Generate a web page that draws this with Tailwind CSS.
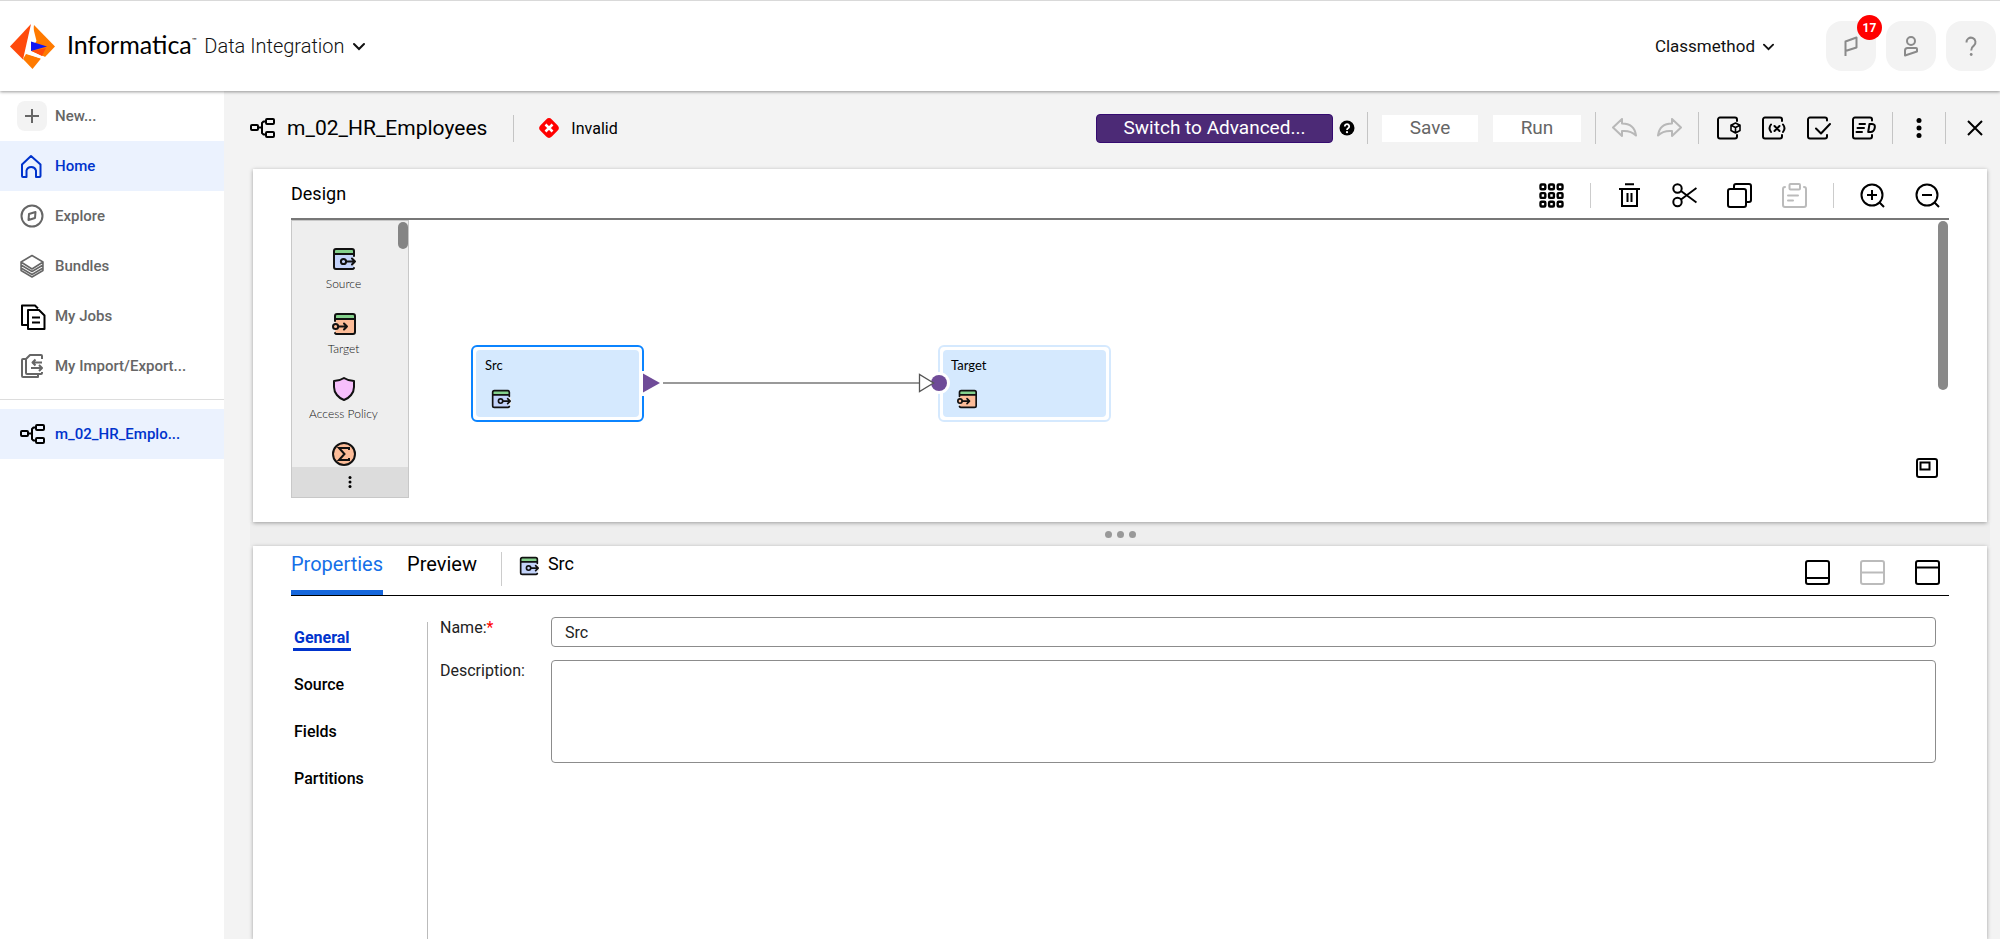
<!DOCTYPE html>
<html lang="en">
<head>
<meta charset="utf-8">
<title>Informatica Data Integration</title>
<script src="https://cdn.jsdelivr.net/npm/@tailwindcss/browser@4"></script>
</head>
<body class="min-h-screen flex flex-col bg-[#f3f3f3] text-black font-[Roboto,sans-serif]">

<svg class="hidden" aria-hidden="true">
  <symbol id="mapping" viewBox="0 0 25 20" fill="none" stroke="currentColor" stroke-width="2" stroke-linejoin="round">
    <rect x="1" y="7" width="7" height="5" rx="1"/><rect x="16" y="1" width="8" height="5" rx="1"/><rect x="16" y="14" width="8" height="5" rx="1"/>
    <path d="M8 9.500h4M16 3.500h-2.500l-1.500 1.500v10l1.500 1.500H16"/>
  </symbol>
  <symbol id="source" viewBox="0 0 24 24" fill="none" stroke="#111" stroke-width="2" stroke-linecap="round" stroke-linejoin="round">
    <path d="M2 7h20v14a1 1 0 0 1-1 1H3a1 1 0 0 1-1-1z" fill="#c3d3fa" stroke="none"/>
    <path d="M4 2h16a2 2 0 0 1 2 2v3H2V4a2 2 0 0 1 2-2z" fill="#84d18c" stroke="none"/>
    <path d="M22 9V4a2 2 0 0 0-2-2H4a2 2 0 0 0-2 2v16a2 2 0 0 0 2 2h16a2 2 0 0 0 2-1M2 7h20"/>
    <path d="M20.500 10.500H24v8h-3.500z" fill="#eee" stroke="none"/>
    <circle cx="11.500" cy="14.500" r="2.600"/><path d="M14.500 14.500H23M20 11.500l3 3-3 3"/>
  </symbol>
  <symbol id="target" viewBox="0 0 24 24" fill="none" stroke="#111" stroke-width="2" stroke-linecap="round" stroke-linejoin="round">
    <path d="M3 7h20v14a1 1 0 0 1-1 1H4a1 1 0 0 1-1-1z" fill="#fcbc98" stroke="none"/>
    <path d="M5 2h16a2 2 0 0 1 2 2v3H3V4a2 2 0 0 1 2-2z" fill="#84d18c" stroke="none"/>
    <path d="M3 9V4a2 2 0 0 1 2-2h16a2 2 0 0 1 2 2v16a2 2 0 0 1-2 2H5a2 2 0 0 1-2-1M3 7h20"/>
    <path d="M1 10.500h3.500v8H1z" fill="#eee" stroke="none"/>
    <circle cx="3.600" cy="14.500" r="2.600" fill="#fcbc98"/><path d="M6.500 14.500H15M12 11.500l3 3-3 3"/>
  </symbol>
</svg>

<header class="relative z-10 h-[91px] shrink-0 flex items-center bg-white border-t border-[#d9d9d9] pl-[10px] pr-1 shadow-[0_1px_3px_rgba(0,0,0,0.4)]">
  <svg class="size-[45px]" viewBox="0 0 45 45" aria-hidden="true">
    <path d="M21 0L0 22.500l13 13z" fill="#ff4a0c"/>
    <path d="M24 1L45 22.500 35 33 21 27.500z" fill="#ff7a00"/>
    <path d="M16 30l15 4.500L22.500 45 13 35z" fill="#ff7a00"/>
    <path d="M22.500 0L15 29l17 6 3-2-14-6z" fill="#fff"/>
    <path d="M22.500 1l4 16-6 9-4 2z" fill="#fff"/>
    <path d="M22 27l14-3-4 8z" fill="#ff4a0c"/>
    <path d="M21 17.500l16 5-16 4.500z" fill="#1016f5"/>
  </svg>
  <div class="ml-3 flex items-start font-[Lato,sans-serif] text-[25px] leading-8 pb-1">Informatica<span class="text-[6px] leading-[24px]">™</span></div>
  <button class="ml-2 flex items-center gap-2 text-[20px] leading-6 font-light text-[#111]">Data Integration
    <svg class="size-3" viewBox="0 0 12 12" fill="none" stroke="#111" stroke-width="2" stroke-linecap="round"><path d="M1 4l5 5 5-5"/></svg>
  </button>
  <button class="ml-auto mr-[52px] flex items-center gap-2 text-[17px] leading-6 text-[#111]">Classmethod
    <svg class="size-[11px]" viewBox="0 0 12 12" fill="none" stroke="#111" stroke-width="2" stroke-linecap="round"><path d="M1 4l5 5 5-5"/></svg>
  </button>
  <div class="flex gap-[10px] text-[#8a8a8a]">
    <button aria-label="Notifications" class="relative size-[50px] rounded-2xl bg-[#f3f3f3] flex items-center justify-center">
      <svg class="size-6" viewBox="0 0 24 24" fill="none" stroke="currentColor" stroke-width="2" stroke-linejoin="round"><path d="M6.500 22V7.500L17.500 3.500v10L6.500 17"/></svg>
      <span class="absolute -top-[6px] -right-[6px] size-[25px] rounded-full bg-[#ff0000] text-white text-xs font-bold flex items-center justify-center">17</span>
    </button>
    <button aria-label="Account" class="size-[50px] rounded-2xl bg-[#f3f3f3] flex items-center justify-center">
      <svg class="size-6" viewBox="0 0 24 24" fill="none" stroke="currentColor" stroke-width="2" stroke-linejoin="round"><circle cx="12" cy="7" r="4"/><path d="M6 21.500v-5a2.500 2.500 0 0 1 2.500-2.500H17a1 1 0 0 1 1 1v2.500z"/></svg>
    </button>
    <button aria-label="Help" class="size-[50px] rounded-2xl bg-[#f3f3f3] flex items-center justify-center">
      <svg class="size-6" viewBox="0 0 24 24" fill="none" stroke="currentColor" stroke-width="2"><path d="M7.500 8.500a4.500 4.500 0 1 1 7.500 3c-2 1.500-2.800 2-2.800 5"/><circle cx="12.200" cy="20.500" r="1.400" fill="currentColor" stroke="none"/></svg>
    </button>
  </div>
</header>

<div class="flex-1 flex">
  <nav class="w-[224px] shrink-0 bg-white text-[15px] font-medium text-[#666]">
    <button class="w-full h-[50px] flex items-center pl-[17px] gap-2">
      <span class="size-[30px] rounded-lg bg-[#f3f3f3] flex items-center justify-center"><svg class="size-4" viewBox="0 0 16 16" stroke="#666" stroke-width="2"><path d="M8 1v14M1 8h14"/></svg></span>New...
    </button>
    <a href="#home" class="h-[50px] flex items-center pl-5 gap-[11px] bg-[#ebf2fe] text-[#0033cc]">
      <svg class="size-6" viewBox="0 0 24 24" fill="none" stroke="currentColor" stroke-width="2" stroke-linejoin="round"><path d="M2 10.500L11 2l9.500 8.500V22a1 1 0 0 1-1 1H16v-6.500a5 5 0 0 0-9.500 0V23H3a1 1 0 0 1-1-1z"/></svg>Home
    </a>
    <a href="#explore" class="h-[50px] flex items-center pl-5 gap-[11px]">
      <svg class="size-6" viewBox="0 0 24 24" fill="none" stroke="currentColor" stroke-width="2" stroke-linejoin="round"><circle cx="12" cy="12" r="10.500"/><path d="M9 10l6.500-2L15 14l-6.500 2z"/></svg>Explore
    </a>
    <a href="#bundles" class="h-[50px] flex items-center pl-5 gap-[11px]">
      <svg class="size-6" viewBox="0 0 24 24" fill="none" stroke="currentColor" stroke-width="1.500" stroke-linejoin="round"><path d="M12 1.500l11 6.500-11 7L1 8zM1 8v3l11 6.500L23 11V8M1 11v3l11 6.500L23 14v-3M1 14v2.500l11 6.500 11-6.500V14"/></svg>Bundles
    </a>
    <a href="#jobs" class="h-[50px] flex items-center pl-5 gap-[11px]">
      <svg class="size-6 overflow-visible" viewBox="0 0 24 24" fill="none" stroke="#000" stroke-width="2" stroke-linejoin="round"><path d="M8 21H2V1.500h13l3 3M8 6h11l5.500 5.500V25H8zM12 13.500h8M12 18.500h8"/></svg>My Jobs
    </a>
    <a href="#import" class="h-[50px] flex items-center pl-5 gap-[11px]">
      <svg class="size-6" viewBox="0 0 24 24" fill="none" stroke="currentColor" stroke-width="2" stroke-linejoin="round"><path d="M6 5H3a1 1 0 0 0-1 1v16a1 1 0 0 0 1 1h15v-3M22 5V2a1 1 0 0 0-1-1H10L6 5v14a1 1 0 0 0 1 1h14a1 1 0 0 0 1-1v-1M22 8.500H12M15.500 5.500l-3 3 3 3M11 14h11M19 11l3 3-3 3"/></svg>My Import/Export...
    </a>
    <div class="mt-2 mb-[9px] border-t border-[#ddd]"></div>
    <a href="#mapping" class="h-[50px] flex items-center pl-5 gap-[10px] bg-[#ebf2fe] text-[#0033cc]">
      <svg class="w-[25px] h-5 text-black"><use href="#mapping"/></svg>m_02_HR_Emplo...
    </a>
  </nav>

  <main class="flex-1 min-w-0 flex flex-col">
    <div class="h-[78px] shrink-0 flex items-center pb-1 pl-[26px] pr-4">
      <svg class="w-[25px] h-5"><use href="#mapping"/></svg>
      <h1 class="ml-3 pt-0.5 text-[21px]">m_02_HR_Employees</h1>
      <div class="ml-[26px] w-px h-[27px] bg-[#c4c4c4]"></div>
      <svg class="ml-[25px] size-5" viewBox="0 0 20 20"><rect x="2" y="2" width="16" height="16" rx="4" transform="rotate(45 10 10)" fill="#f00"/><path d="M6.500 6.500l7 7M13.500 6.500l-7 7" stroke="#fff" stroke-width="2.500"/></svg>
      <span class="ml-3 pt-0.5 text-[16px]">Invalid</span>

      <button class="ml-auto w-[237px] h-[29px] rounded-sm border border-[#350b70] bg-[#4c2a76] text-white text-[19px] leading-6">Switch to Advanced...</button>
      <svg class="ml-1.5 size-4" viewBox="0 0 16 16"><circle cx="8" cy="8" r="7.500"/><path d="M5.800 6.400a2.200 2.200 0 1 1 3.600 1.700C8.300 8.800 8 9 8 10" fill="none" stroke="#fff" stroke-width="1.800"/><circle cx="8" cy="12.200" r="1.100" fill="#fff"/></svg>
      <div class="ml-3 w-px h-8 bg-[#c4c4c4]"></div>
      <button class="ml-[14px] w-24 h-[27px] bg-white text-[#666] text-[19px] leading-6">Save</button>
      <button class="ml-[15px] w-[88px] h-[27px] bg-white text-[#666] text-[19px] leading-6">Run</button>
      <div class="ml-[14px] w-px h-8 bg-[#c4c4c4]"></div>
      <button aria-label="Undo" class="ml-4"><svg class="w-[25px] h-5 text-[#b8b8b8]" viewBox="0 0 25 20" fill="none" stroke="currentColor" stroke-width="2" stroke-linejoin="round"><path d="M1 9.500L10 1v4.500c8 0 13 4.500 14 12-3.500-3.500-8-5-14-4.500V18z"/></svg></button>
      <button aria-label="Redo" class="ml-5"><svg class="w-[25px] h-5 text-[#b8b8b8]" viewBox="0 0 25 20" fill="none" stroke="currentColor" stroke-width="2" stroke-linejoin="round"><path d="M24 9.500L15 1v4.500c-8 0-13 4.500-14 12 3.500-3.500 8-5 14-4.500V18z"/></svg></button>
      <div class="ml-4 w-px h-8 bg-[#c4c4c4]"></div>
      <button aria-label="Dependencies" class="ml-[18px]"><svg class="size-6" viewBox="0 0 24 24" fill="none" stroke="#000" stroke-width="2" stroke-linecap="round" stroke-linejoin="round"><path d="M20 5V3.500a2 2 0 0 0-2-2H3a2 2 0 0 0-2 2v17a2 2 0 0 0 2 2h15a2 2 0 0 0 2-2V19"/><path d="M18.500 7l4.500 2.200v5.300L18.500 17 14 14.500V9.200zM14 9.200l4.500 2.300L23 9.200M18.500 11.500V17" stroke-width="1.600"/></svg></button>
      <button aria-label="Parameters" class="ml-[21px]"><svg class="size-6" viewBox="0 0 24 24" fill="none" stroke="#000" stroke-width="2" stroke-linecap="round"><path d="M20 5V3.500a2 2 0 0 0-2-2H3a2 2 0 0 0-2 2v17a2 2 0 0 0 2 2h15a2 2 0 0 0 2-2V19"/><path d="M9 8.500c-2 2.500-2 5 0 7.500M21 8.500c2 2.500 2 5 0 7.500M12.500 10l5 5M17.500 10l-5 5"/></svg></button>
      <button aria-label="Validate" class="ml-[21px]"><svg class="size-6" viewBox="0 0 24 24" fill="none" stroke="#000" stroke-width="2" stroke-linecap="round" stroke-linejoin="round"><path d="M20 4.500V3.500a2 2 0 0 0-2-2H3a2 2 0 0 0-2 2v17a2 2 0 0 0 2 2h15a2 2 0 0 0 2-2V19M9 12.500l5 5 9-9.500"/></svg></button>
      <button aria-label="Details" class="ml-[21px]"><svg class="size-6" viewBox="0 0 24 24" fill="none" stroke="#000" stroke-width="2" stroke-linecap="round" stroke-linejoin="round"><path d="M20 4.500V3.500a2 2 0 0 0-2-2H3a2 2 0 0 0-2 2v17a2 2 0 0 0 2 2h15a2 2 0 0 0 2-2V19M7.500 8H13M5.500 12H12M4.500 16H10M17.500 8H20c2.500 0 3.200 1.500 2.700 4s-2 4-4.200 4h-2.300z"/></svg></button>
      <div class="ml-4 w-px h-8 bg-[#c4c4c4]"></div>
      <button aria-label="More" class="ml-4"><svg class="size-5" viewBox="0 0 20 20"><circle cx="10" cy="2.500" r="2.500"/><circle cx="10" cy="10" r="2.500"/><circle cx="10" cy="17.500" r="2.500"/></svg></button>
      <div class="ml-4 w-px h-8 bg-[#c4c4c4]"></div>
      <button aria-label="Close" class="ml-5"><svg class="size-[18px]" viewBox="0 0 18 18" stroke="#000" stroke-width="2"><path d="M2 2l14 14M16 2L2 16"/></svg></button>
    </div>

    <section class="relative ml-[29px] mr-[13px] px-[38px] h-[353px] shrink-0 bg-white shadow-[0_1px_4px_rgba(0,0,0,0.35)] flex flex-col">
      <div class="h-[51px] shrink-0 flex items-center border-b-2 border-[#777] pr-[9px] pt-1">
        <h2 class="text-[18px] pb-1">Design</h2>
        <button aria-label="Grid" class="ml-auto"><svg class="size-[25px]" viewBox="0 0 25 25" fill="none" stroke="#000" stroke-width="2.400"><rect x="1.500" y="1.500" width="4.800" height="4.800" rx="1"/><rect x="10.100" y="1.500" width="4.800" height="4.800" rx="1"/><rect x="18.700" y="1.500" width="4.800" height="4.800" rx="1"/><rect x="1.500" y="10.100" width="4.800" height="4.800" rx="1"/><rect x="10.100" y="10.100" width="4.800" height="4.800" rx="1"/><rect x="18.700" y="10.100" width="4.800" height="4.800" rx="1"/><rect x="1.500" y="18.700" width="4.800" height="4.800" rx="1"/><rect x="10.100" y="18.700" width="4.800" height="4.800" rx="1"/><rect x="18.700" y="18.700" width="4.800" height="4.800" rx="1"/></svg></button>
        <div class="mx-[26px] w-px h-[25px] bg-[#ccc]"></div>
        <div class="flex gap-[30px]">
          <button aria-label="Delete"><svg class="size-[25px]" viewBox="0 0 25 25" fill="none" stroke="#000" stroke-width="2"><path d="M8 1.200h9M2 6h21M5 6v17h15V6M10.500 10v9M14.500 10v9"/></svg></button>
          <button aria-label="Cut"><svg class="size-[25px]" viewBox="0 0 25 25" fill="none" stroke="#000" stroke-width="2"><circle cx="5.500" cy="5.500" r="4.200"/><circle cx="5.500" cy="19" r="4.200"/><path d="M9 8l15.500 11.500M9 16.500L24.500 5"/></svg></button>
          <button aria-label="Copy"><svg class="size-[25px]" viewBox="0 0 25 25" fill="none" stroke="#000" stroke-width="2"><rect x="1" y="6" width="18" height="18" rx="2"/><path d="M7 6V3a2 2 0 0 1 2-2h13a2 2 0 0 1 2 2v14a2 2 0 0 1-2 2h-3"/></svg></button>
          <button aria-label="Paste"><svg class="size-[25px]" viewBox="0 0 25 25" fill="none" stroke="#bbb" stroke-width="2" stroke-linecap="round"><path d="M3 4a2 2 0 0 0-2 2v16a2 2 0 0 0 2 2h19a2 2 0 0 0 2-2V6a2 2 0 0 0-2-2M6 12.500h10M6 17.500h5"/><rect x="7.500" y="1" width="10.500" height="5.500" rx="1"/></svg></button>
        </div>
        <div class="mx-[26px] w-px h-[25px] bg-[#ccc]"></div>
        <div class="flex gap-[30px]">
          <button aria-label="Zoom in"><svg class="size-[25px]" viewBox="0 0 25 25" fill="none" stroke="#000" stroke-width="2"><circle cx="12" cy="12" r="10.500"/><path d="M19 19l5 5M12 7v10M7 12h10"/></svg></button>
          <button aria-label="Zoom out"><svg class="size-[25px]" viewBox="0 0 25 25" fill="none" stroke="#000" stroke-width="2"><circle cx="12" cy="12" r="10.500"/><path d="M19 19l5 5M7 12h10"/></svg></button>
        </div>
      </div>

      <div class="flex-1 flex items-start">
        <div class="relative w-[118px] h-[278px] border border-[#c8c8c8] bg-[#eee] flex flex-col font-[Lato,sans-serif] font-light text-[#111]">
          <div class="flex-1 min-h-0 overflow-hidden w-[103px] pt-[26px] flex flex-col gap-[7px] text-[12px] leading-4">
            <div class="h-[58px] shrink-0 flex flex-col items-center gap-[5px]"><svg class="size-6"><use href="#source"/></svg>Source</div>
            <div class="h-[58px] shrink-0 flex flex-col items-center gap-[5px]"><svg class="size-6"><use href="#target"/></svg>Target</div>
            <div class="h-[58px] shrink-0 flex flex-col items-center gap-[5px]"><svg class="size-6" viewBox="0 0 24 24" fill="#f6bffb" stroke="#111" stroke-width="2" stroke-linejoin="round"><path d="M12 1c3 2 6.500 3 10 3v6c0 6-4.500 11-10 13C6.500 21 2 16 2 10V4c3.500 0 7-1 10-3z"/></svg>Access Policy</div>
            <div class="h-[58px] shrink-0 flex flex-col items-center"><svg class="size-6" viewBox="0 0 24 24" fill="#fcbc98" stroke="#111" stroke-width="2"><circle cx="12" cy="12" r="11"/><path d="M17 8V6H7l5.500 6L7 18h10v-2" fill="none"/></svg></div>
          </div>
          <button aria-label="More transformations" class="h-[30px] shrink-0 bg-[#dcdcdc] flex items-center justify-center"><svg class="size-3" viewBox="0 0 12 12"><circle cx="6" cy="1.500" r="1.500"/><circle cx="6" cy="6" r="1.500"/><circle cx="6" cy="10.500" r="1.500"/></svg></button>
          <div class="absolute top-px right-0 w-[10px] h-[27px] rounded-full bg-[#858585]"></div>
        </div>

        <div class="relative flex-1 self-stretch font-[Lato,sans-serif] text-[13px] leading-4">
          <div class="absolute left-[62px] top-[125px] w-[173px] h-[77px] rounded-md border-2 border-[#0b84ff] p-[3px]">
            <div class="size-full rounded bg-[#d5e9fe] pl-[9px] pt-[7px] flex flex-col gap-4">Src<svg class="ml-[6px] size-5"><use href="#source"/></svg></div>
          </div>
          <div class="absolute left-[529px] top-[125px] w-[173px] h-[77px] rounded-md border-2 border-[#d5e9fe] p-[3px]">
            <div class="size-full rounded bg-[#d5e9fe] pl-2 pt-[7px] flex flex-col gap-4">Target<svg class="ml-[6px] size-5"><use href="#target"/></svg></div>
          </div>
          <svg class="absolute left-0 top-0 w-[710px] h-[220px]" fill="none">
            <path d="M232 151h4v25h-4z" fill="#fff"/>
            <path d="M234 153.500l17 9.500-17 9.500z" fill="#6f4b98"/>
            <path d="M254 163h256" stroke="#777" stroke-width="1.500"/>
            <circle cx="530" cy="163" r="11" fill="#fff"/>
            <circle cx="530" cy="163" r="8" fill="#6f4b98"/>
            <path d="M510.500 154.500v17l14-8.500z" stroke="#555" fill="#fff" stroke-width="1.300"/>
          </svg>
          <div class="absolute right-px top-px w-[10px] h-[169px] rounded-full bg-[#898989]"></div>
          <button aria-label="Overview" class="absolute right-[11px] top-[238px]"><svg class="w-[22px] h-5" viewBox="0 0 22 20" fill="none" stroke="#000" stroke-width="2"><rect x="1" y="1" width="20" height="18" rx="2"/><rect x="4.500" y="4.500" width="9" height="7"/></svg></button>
        </div>
      </div>
    </section>

    <div class="ml-[26px] mr-[10px] h-6 shrink-0 bg-[#eee] flex items-center justify-center gap-[5px]">
      <span class="size-[7px] rounded-full bg-[#999]"></span><span class="size-[7px] rounded-full bg-[#999]"></span><span class="size-[7px] rounded-full bg-[#999]"></span>
    </div>

    <section class="ml-[29px] mr-[13px] px-[38px] flex-1 bg-white shadow-[0_1px_4px_rgba(0,0,0,0.35)] flex flex-col">
      <div class="h-[50px] shrink-0 flex border-b border-black pr-[9px]">
        <button class="h-full pb-2 text-[20px] text-[#146fe8] border-b-5 border-[#1667dc]">Properties</button>
        <button class="ml-6 h-full pb-[13px] text-[20px]">Preview</button>
        <div class="ml-6 mt-[6px] w-px h-[34px] bg-[#ccc]"></div>
        <svg class="ml-[17px] mt-[10px] size-5"><use href="#source"/></svg>
        <span class="ml-[9px] pt-[6px] text-[18px] leading-6">Src</span>
        <div class="ml-auto flex gap-[30px] items-center pt-1">
          <button aria-label="Maximise top"><svg class="size-[25px]" viewBox="0 0 25 25" fill="none" stroke="#000" stroke-width="2"><rect x="1" y="1" width="23" height="23" rx="2"/><path d="M1 18h23"/></svg></button>
          <button aria-label="Split"><svg class="size-[25px]" viewBox="0 0 25 25" fill="none" stroke="#bbb" stroke-width="2"><rect x="1" y="1" width="23" height="23" rx="2"/><path d="M1 12.500h23"/></svg></button>
          <button aria-label="Maximise bottom"><svg class="size-[25px]" viewBox="0 0 25 25" fill="none" stroke="#000" stroke-width="2"><rect x="1" y="1" width="23" height="23" rx="2"/><path d="M1 7.500h23"/></svg></button>
        </div>
      </div>

      <div class="flex-1 flex">
        <div class="w-[136px] pt-[29px] pl-[2px] flex flex-col items-start gap-[21px] text-[16px] leading-[26px] font-medium">
          <button class="h-[26px] px-px flex items-start border-b-3 border-[#0033cc] text-[#0033cc] font-bold">General</button>
          <button class="px-px">Source</button>
          <button class="px-px">Fields</button>
          <button class="px-px">Partitions</button>
        </div>
        <div class="mt-[26px] w-px bg-[#bbb]"></div>
        <form class="flex-1 pt-[21px] pl-3 pr-[13px] grid grid-cols-[111px_1fr] content-start gap-y-[13px] text-[16px] text-[#222]">
          <label for="name" class="leading-[22px]">Name:<span class="text-[#f00]">*</span></label>
          <input id="name" type="text" value="Src" class="w-full h-[30px] px-[13px] rounded-sm border border-[#8c8c8c]">
          <label for="description" class="leading-[22px]">Description:</label>
          <textarea id="description" class="w-full h-[103px] px-3 py-1 rounded-sm border border-[#8c8c8c] resize-none"></textarea>
        </form>
      </div>
    </section>
  </main>
</div>
</body>
</html>
